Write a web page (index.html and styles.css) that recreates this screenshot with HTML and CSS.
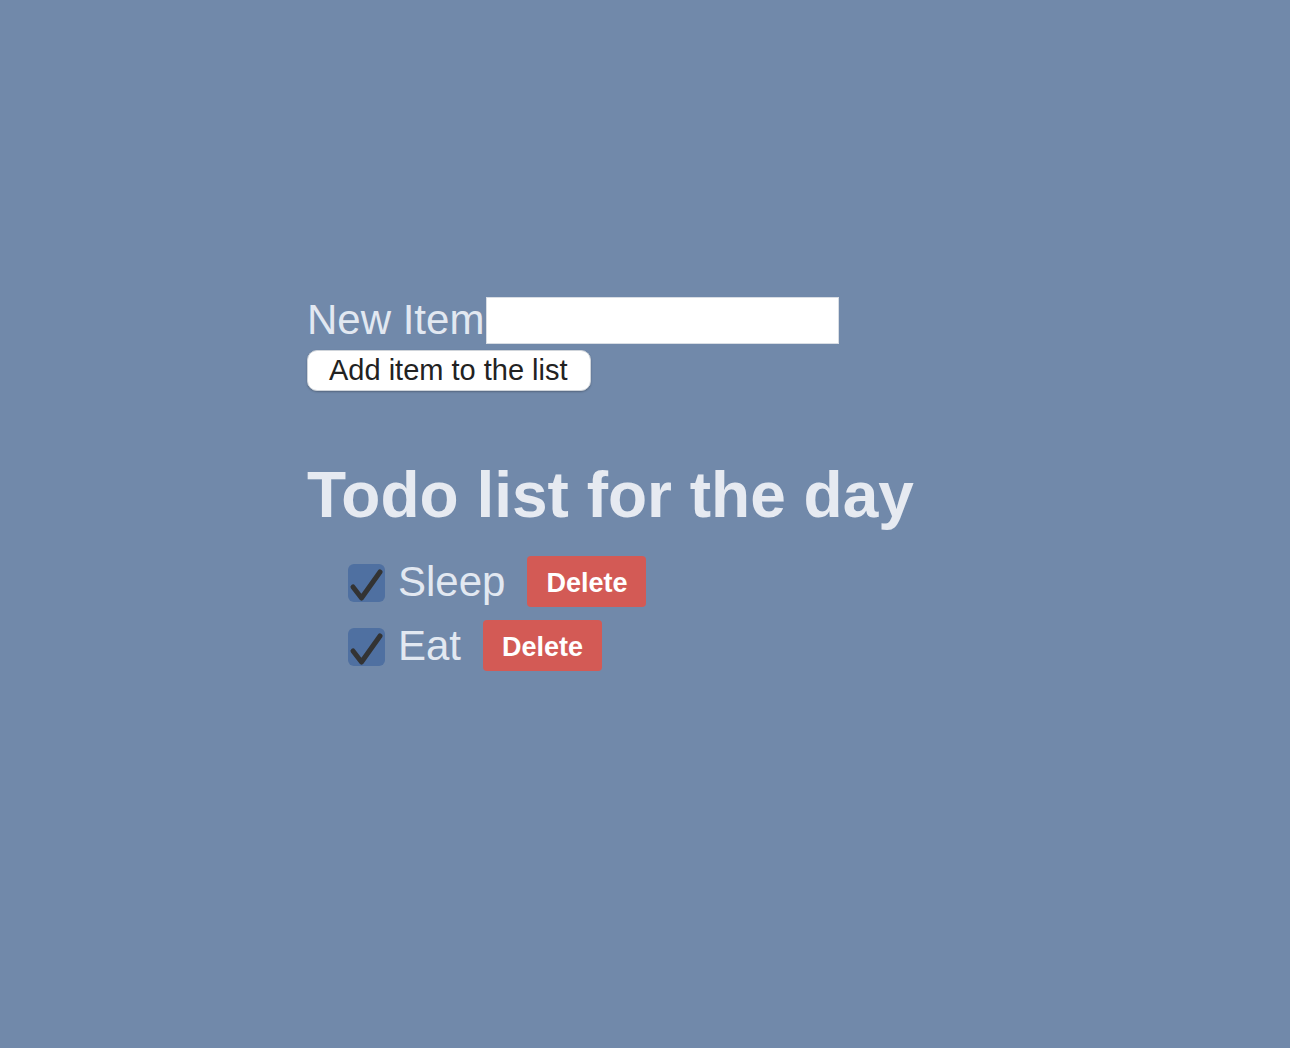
FILE: index.html
```html
<!DOCTYPE html>
<html lang="en">
<head>
<meta charset="utf-8">
<title>Todo list</title>
<link rel="stylesheet" href="styles.css">
</head>
<body>
<main class="app">
  <form class="new-item">
    <div class="field-row">
      <label class="field-label" for="item">New Item</label>
      <input class="field-input" id="item" type="text">
    </div>
    <button class="add-btn" type="button">Add item to the list</button>
  </form>
  <h1 class="title">Todo list for the day</h1>
  <ul class="todo-list">
    <li class="todo">
      <span class="check"><svg viewBox="0 0 37 38" width="37" height="38"><path d="M5 23 L13.5 34 L32 8" fill="none" stroke="#333333" stroke-width="5" stroke-linecap="round" stroke-linejoin="round"/></svg></span>
      <span class="todo-text">Sleep</span>
      <button class="del-btn" type="button">Delete</button>
    </li>
    <li class="todo">
      <span class="check"><svg viewBox="0 0 37 38" width="37" height="38"><path d="M5 23 L13.5 34 L32 8" fill="none" stroke="#333333" stroke-width="5" stroke-linecap="round" stroke-linejoin="round"/></svg></span>
      <span class="todo-text">Eat</span>
      <button class="del-btn" type="button">Delete</button>
    </li>
  </ul>
</main>
</body>
</html>
```
FILE: styles.css
```css
html, body {
  margin: 0;
  padding: 0;
}
body {
  background: #7189aa;
  font-family: "Liberation Sans", Arial, sans-serif;
  color: #e2e8f1;
  min-height: 1048px;
}
.app {
  padding: 297px 0 0 307px;
}
.new-item {
  display: flex;
  flex-direction: column;
  align-items: flex-start;
  gap: 6px;
}
.field-row {
  display: flex;
  align-items: flex-end;
}
.field-label {
  font-size: 42px;
  line-height: 44px;
  margin-bottom: 2px;
}
.field-input {
  width: 353px;
  height: 47px;
  box-sizing: border-box;
  margin: 0 0 0 2px;
  border: 1px solid #d8dde4;
  background: #fff;
  padding: 0;
}
.add-btn {
  font-family: "Liberation Sans", Arial, sans-serif;
  font-size: 29px;
  color: #222;
  background: #fff;
  border: 1px solid #cfd4da;
  border-radius: 10px;
  height: 41px;
  padding: 0 22px 0 21px;
  box-shadow: 0 1px 2px rgba(0,0,0,0.25);
}
.title {
  font-size: 64px;
  line-height: 72px;
  font-weight: bold;
  margin: 68px 0 0 0;
  color: #e6eaf1;
}
.todo-list {
  list-style: none;
  margin: 25px 0 0 0;
  padding: 0 0 0 41px;
  display: flex;
  flex-direction: column;
  gap: 13px;
}
.todo {
  display: flex;
  align-items: center;
  height: 51px;
}
.check {
  width: 37px;
  height: 38px;
  border-radius: 6px;
  background: #4f70a1;
  display: block;
  margin-top: 2px;
}
.check svg {
  display: block;
}
.todo-text {
  font-size: 42px;
  margin-left: 13px;
  margin-right: 22px;
}
.del-btn {
  font-family: "Liberation Sans", Arial, sans-serif;
  font-weight: bold;
  font-size: 27px;
  color: #fff;
  background: #d35a55;
  border: none;
  border-radius: 4px;
  height: 51px;
  width: 119px;
  padding: 3px 0 0 0;
}
```
